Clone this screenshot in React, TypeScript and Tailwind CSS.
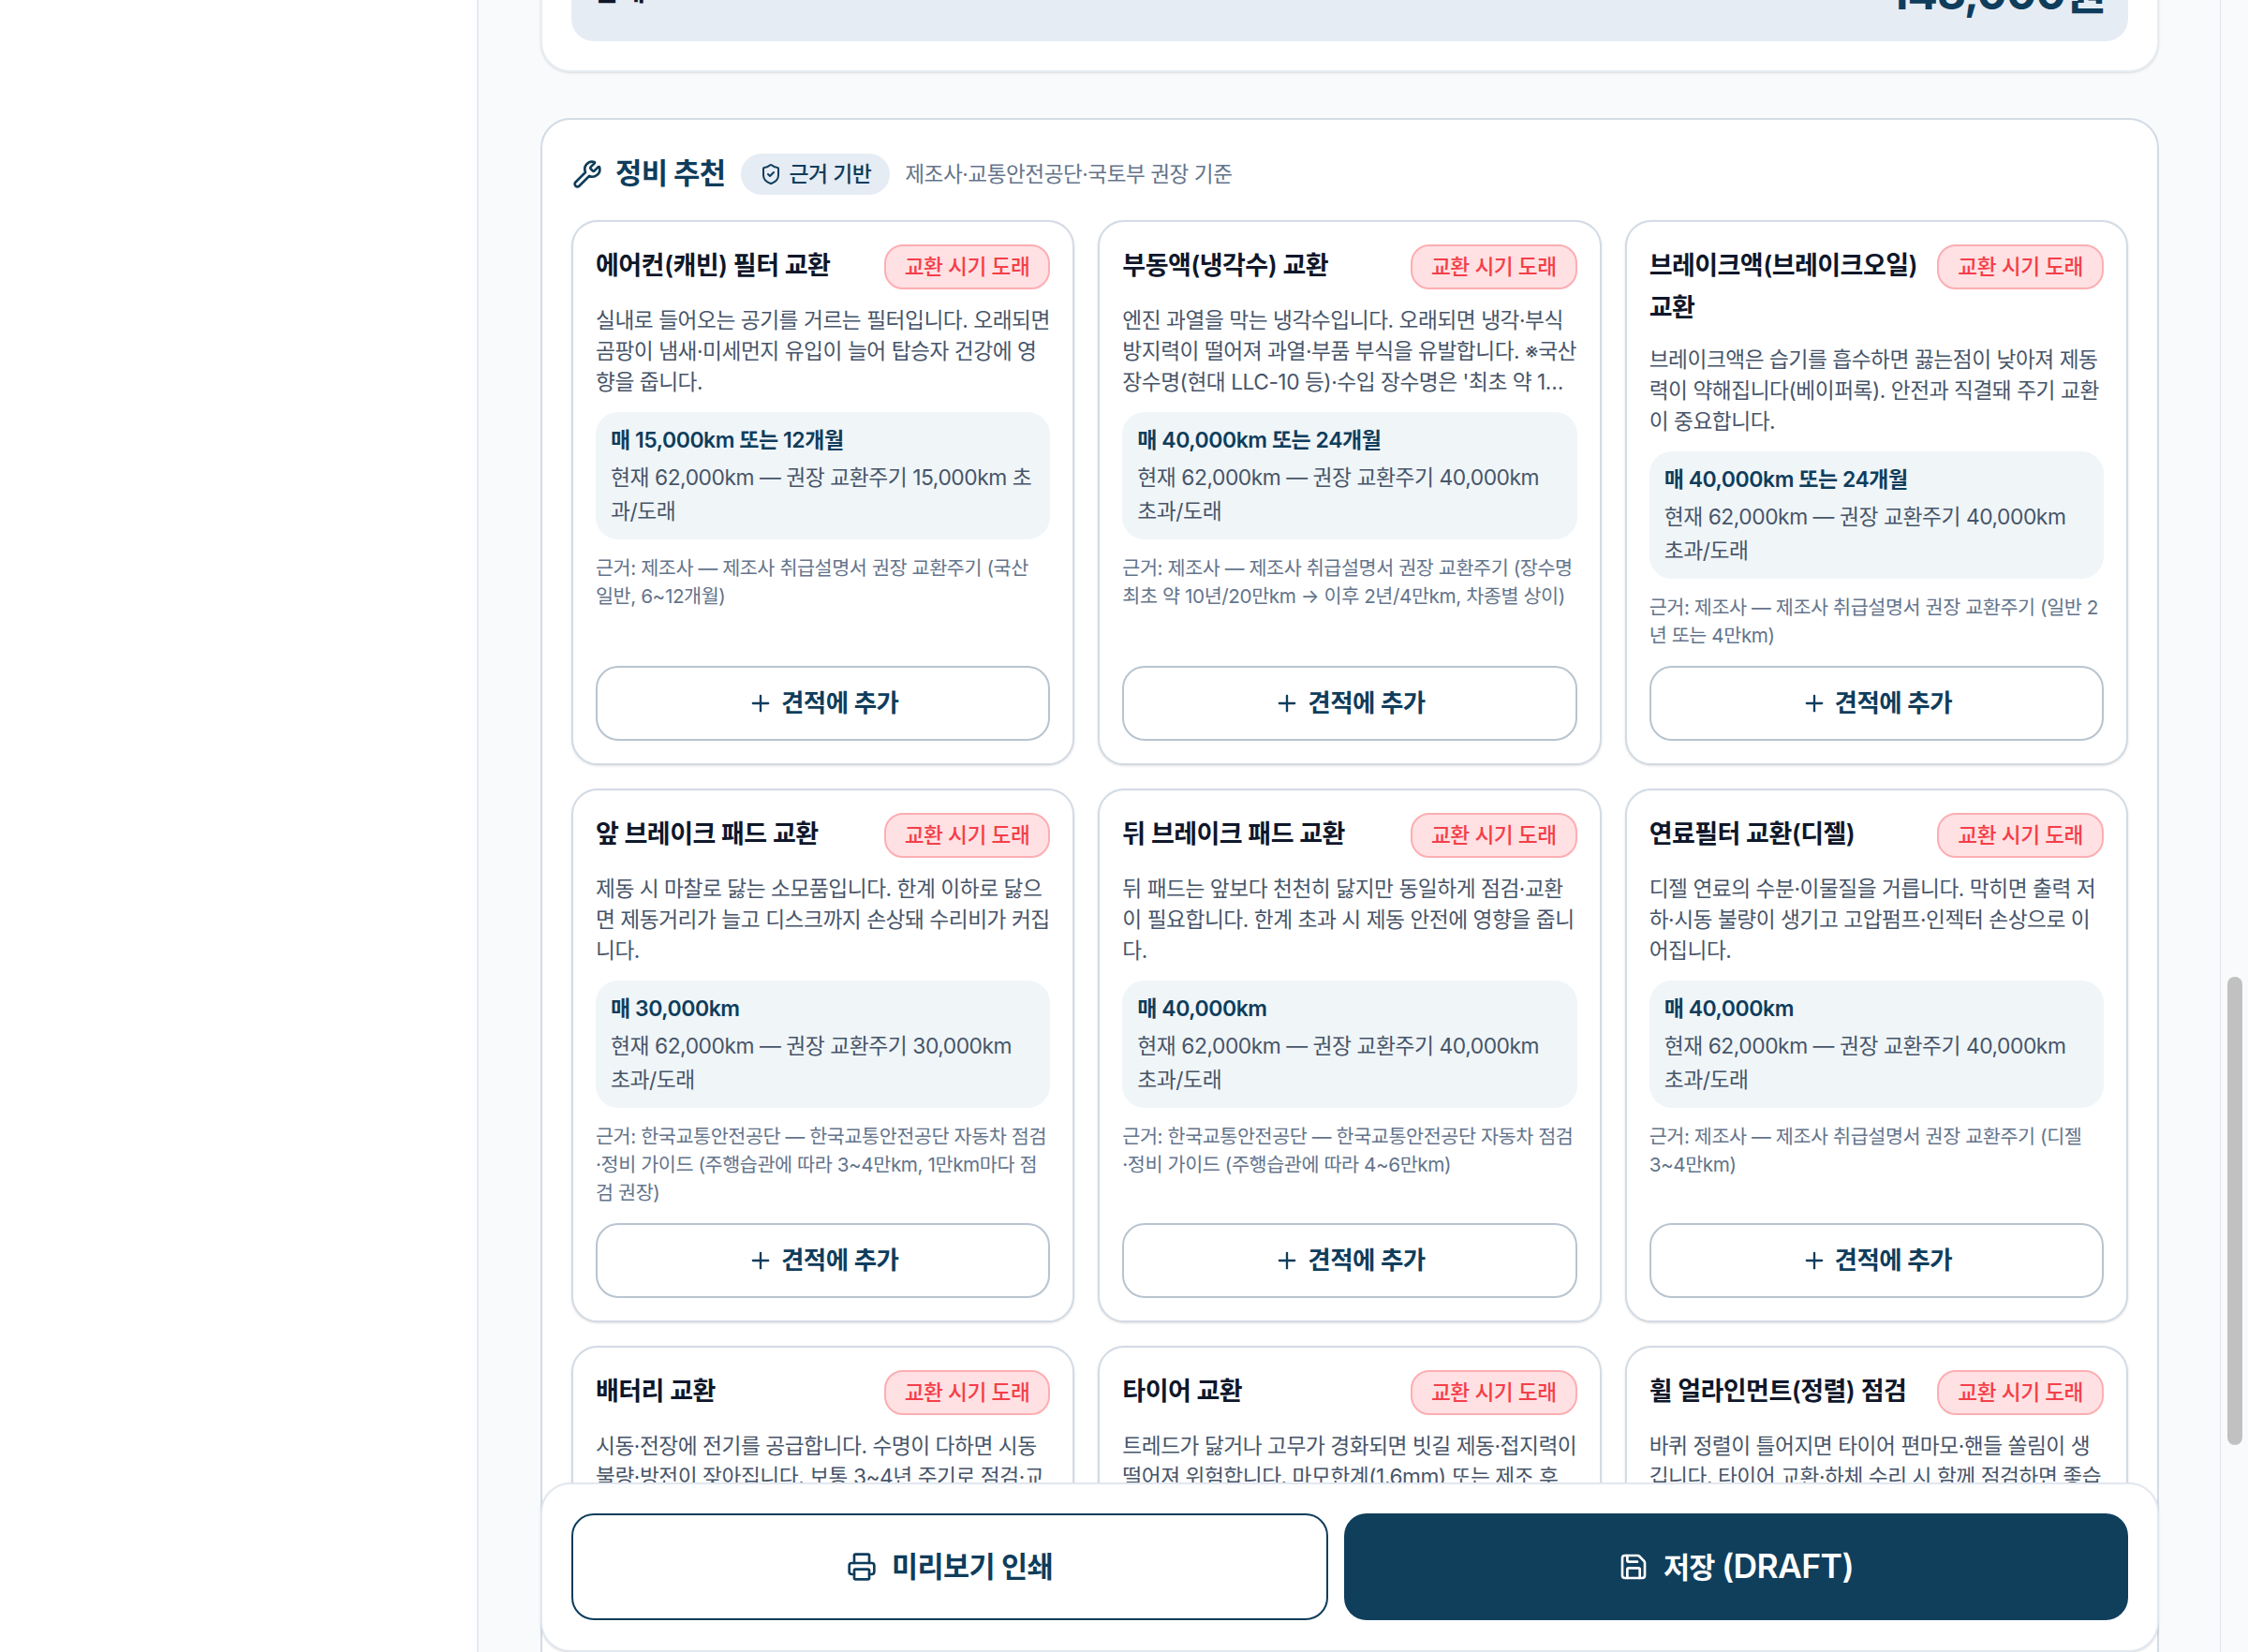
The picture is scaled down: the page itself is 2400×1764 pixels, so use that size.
import { Plus, Printer, Save, ShieldCheck, Wrench } from 'lucide-react'

type Item = {
  title: string
  desc: string
  cycle: string
  note: string
  basis: string
}

const items: Item[] = [
  {
    title: '에어컨(캐빈) 필터 교환',
    desc: '실내로 들어오는 공기를 거르는 필터입니다. 오래되면\n곰팡이 냄새·미세먼지 유입이 늘어 탑승자 건강에 영\n향을 줍니다.',
    cycle: '매 15,000km 또는 12개월',
    note: '현재 62,000km — 권장 교환주기 15,000km 초과/도래',
    basis: '근거: 제조사 — 제조사 취급설명서 권장 교환주기 (국산 일반, 6~12개월)',
  },
  {
    title: '부동액(냉각수) 교환',
    desc: "엔진 과열을 막는 냉각수입니다. 오래되면 냉각·부식\n방지력이 떨어져 과열·부품 부식을 유발합니다. ※국산\n장수명(현대 LLC-10 등)·수입 장수명은 '최초 약 1…",
    cycle: '매 40,000km 또는 24개월',
    note: '현재 62,000km — 권장 교환주기 40,000km 초과/도래',
    basis: '근거: 제조사 — 제조사 취급설명서 권장 교환주기 (장수명 최초 약 10년/20만km → 이후 2년/4만km, 차종별 상이)',
  },
  {
    title: '브레이크액(브레이크오일) 교환',
    desc: '브레이크액은 습기를 흡수하면 끓는점이 낮아져 제동\n력이 약해집니다(베이퍼록). 안전과 직결돼 주기 교환\n이 중요합니다.',
    cycle: '매 40,000km 또는 24개월',
    note: '현재 62,000km — 권장 교환주기 40,000km 초과/도래',
    basis: '근거: 제조사 — 제조사 취급설명서 권장 교환주기 (일반 2년 또는 4만km)',
  },
  {
    title: '앞 브레이크 패드 교환',
    desc: '제동 시 마찰로 닳는 소모품입니다. 한계 이하로 닳으\n면 제동거리가 늘고 디스크까지 손상돼 수리비가 커집\n니다.',
    cycle: '매 30,000km',
    note: '현재 62,000km — 권장 교환주기 30,000km 초과/도래',
    basis: '근거: 한국교통안전공단 — 한국교통안전공단 자동차 점검·정비 가이드 (주행습관에 따라 3~4만km, 1만km마다 점검 권장)',
  },
  {
    title: '뒤 브레이크 패드 교환',
    desc: '뒤 패드는 앞보다 천천히 닳지만 동일하게 점검·교환\n이 필요합니다. 한계 초과 시 제동 안전에 영향을 줍니\n다.',
    cycle: '매 40,000km',
    note: '현재 62,000km — 권장 교환주기 40,000km 초과/도래',
    basis: '근거: 한국교통안전공단 — 한국교통안전공단 자동차 점검·정비 가이드 (주행습관에 따라 4~6만km)',
  },
  {
    title: '연료필터 교환(디젤)',
    desc: '디젤 연료의 수분·이물질을 거릅니다. 막히면 출력 저\n하·시동 불량이 생기고 고압펌프·인젝터 손상으로 이\n어집니다.',
    cycle: '매 40,000km',
    note: '현재 62,000km — 권장 교환주기 40,000km 초과/도래',
    basis: '근거: 제조사 — 제조사 취급설명서 권장 교환주기 (디젤 3~4만km)',
  },
  {
    title: '배터리 교환',
    desc: '시동·전장에 전기를 공급합니다. 수명이 다하면 시동\n불량·방전이 잦아집니다. 보통 3~4년 주기로 점검·교\n환합니다.',
    cycle: '매 60,000km 또는 36개월',
    note: '현재 62,000km — 권장 교환주기 60,000km 초과/도래',
    basis: '근거: 제조사 — 제조사 취급설명서 권장 교환주기',
  },
  {
    title: '타이어 교환',
    desc: '트레드가 닳거나 고무가 경화되면 빗길 제동·접지력이\n떨어져 위험합니다. 마모한계(1.6mm) 또는 제조 후\n5~6년이 기준입니다.',
    cycle: '매 50,000km',
    note: '현재 62,000km — 권장 교환주기 50,000km 초과/도래',
    basis: '근거: 한국교통안전공단 — 자동차 점검·정비 가이드',
  },
  {
    title: '휠 얼라인먼트(정렬) 점검',
    desc: '바퀴 정렬이 틀어지면 타이어 편마모·핸들 쏠림이 생\n깁니다. 타이어 교환·하체 수리 시 함께 점검하면 좋습\n니다.',
    cycle: '매 20,000km',
    note: '현재 62,000km — 권장 점검주기 20,000km 초과/도래',
    basis: '근거: 제조사 — 제조사 취급설명서 권장 점검주기',
  },
]

function ItemCard({ item }: { item: Item }) {
  return (
    <div className="flex flex-col rounded-[28px] border-2 border-[#d3dbe4] bg-white p-6 shadow-sm">
      <div className="flex items-start justify-between gap-4">
        <h3 className="-mb-px pt-px text-[27px] leading-[44.8px] font-semibold tracking-[-0.02em] text-[#0f172a]">{item.title}</h3>
        <span className="h-12 shrink-0 rounded-[20px] border-2 border-[#fcaeb2] bg-[#ffe1e4] px-5 text-[22.7px] leading-[44px] font-medium tracking-[-0.02em] text-[#f43f4a]">
          교환 시기 도래
        </span>
      </div>
      <p className="mt-4 text-[22.7px] leading-[33px] tracking-[-0.02em] whitespace-pre text-[#475569]">{item.desc}</p>
      <div className="mt-4 rounded-[24px] bg-[#f0f5f8] px-4 py-3">
        <div className="text-[23px] leading-[36px] font-semibold tracking-[-0.02em] text-[#0f3d5c]">{item.cycle}</div>
        <div className="mt-1 text-[22.8px] leading-[36px] tracking-[-0.02em] text-[#475569]">{item.note}</div>
      </div>
      <p className="mt-4 mb-[17px] text-[20.7px] leading-[30px] tracking-[-0.02em] text-[#64748b]">{item.basis}</p>
      <button className="mt-auto flex h-20 w-full items-center justify-center gap-2 rounded-[24px] border-2 border-[#b8c4d0] bg-white text-[26.5px] font-semibold tracking-[-0.02em] text-[#0f3d5c]">
        <Plus className="h-7 w-7" strokeWidth={2} />
        견적에 추가
      </button>
    </div>
  )
}

export default function App() {
  return (
    <div className="flex h-screen overflow-hidden bg-white font-['Inter','Noto_Sans_CJK_KR',sans-serif]">
      <aside className="w-[511px] shrink-0 border-r-2 border-[#e4e9ef] bg-white" />

      <main className="relative min-w-0 flex-1 overflow-hidden bg-[#f8fafc] pr-[65px] pl-[66px]">
        <div className="-mt-[84px]">
          {/* 합계 */}
          <section className="rounded-[32px] border-2 border-[#e8edf2] bg-white px-[31px] pt-8 pb-[31px] shadow-sm">
            <div className="flex h-[94px] items-end justify-between rounded-[24px] bg-[#e6ecf3] pr-6 pb-[23px] pl-6">
              <span className="mb-[9px] text-[30px] leading-[46px] font-semibold text-[#0f172a]">합계</span>
              <span className="text-[48px] leading-[56px] font-bold tracking-[-0.02em] text-[#0f3d5c]">143,000원</span>
            </div>
          </section>

          {/* 정비 추천 */}
          <section className="mt-[49px] rounded-[32px] border-2 border-[#d3dbe4] bg-white px-[31px] pt-9 pb-8">
            <div className="flex h-11 items-center">
              <Wrench className="ml-px h-8 w-8 text-[#0f3d5c]" strokeWidth={2} />
              <h2 className="ml-[14px] pb-[2px] text-[30.8px] font-bold tracking-[-0.02em] text-[#0f3d5c]">정비 추천</h2>
              <span className="ml-4 flex h-11 items-center gap-2 rounded-full bg-[#e6ecf3] px-5 text-[22.8px] font-medium tracking-[-0.02em] text-[#0f3d5c]">
                <ShieldCheck className="h-6 w-6" strokeWidth={2} />
                근거 기반
              </span>
              <span className="ml-4 text-[22.6px] tracking-[-0.02em] text-[#64748b]">제조사·교통안전공단·국토부 권장 기준</span>
            </div>
            <div className="mt-[27px] grid grid-cols-3 gap-x-[25px] gap-y-[25px]">
              {items.map(item => (
                <ItemCard key={item.title} item={item} />
              ))}
            </div>
          </section>
        </div>

        {/* 하단 고정 버튼 */}
        <div className="absolute right-[65px] bottom-0 left-[66px] flex h-[181px] gap-[17px] rounded-[32px] border-2 border-[#e2e8f0] bg-white px-[31px] pt-[31px] shadow-sm">
          <button className="flex h-[114px] w-[808px] items-center justify-center gap-4 rounded-[24px] border-2 border-[#0f3d5c] bg-white text-[30.5px] font-semibold tracking-[-0.02em] text-[#0f3d5c]">
            <Printer className="h-8 w-8" strokeWidth={2} />
            미리보기 인쇄
          </button>
          <button className="flex h-[114px] flex-1 items-center justify-center gap-4 rounded-[24px] bg-[#103f5c] text-[30.5px] font-semibold tracking-[-0.02em] text-white">
            <Save className="h-8 w-8" strokeWidth={2} />
            <span>
              저장 <span className="text-[35.5px]">(DRAFT)</span>
            </span>
          </button>
        </div>
      </main>

      <div className="w-[30px] shrink-0 border-l border-[#dfe4ea] bg-[#f8fafc] pt-[1043px] pl-[7px]">
        <div className="h-[500px] w-4 rounded-full bg-[#c1c1c1]" />
      </div>
    </div>
  )
}
